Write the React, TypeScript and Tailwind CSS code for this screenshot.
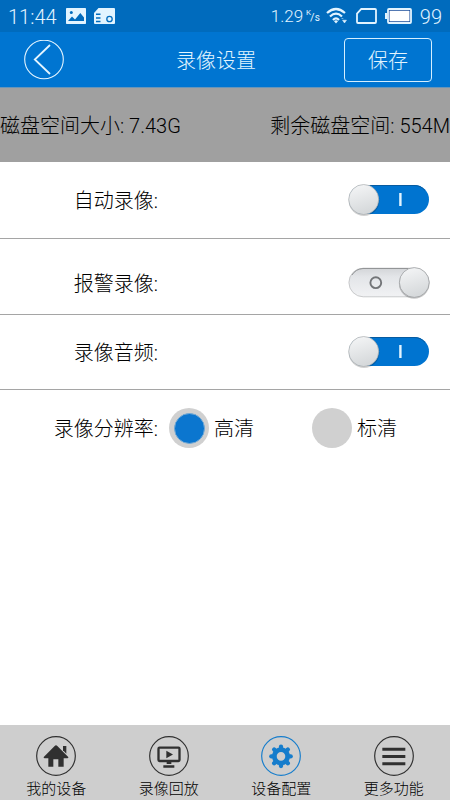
import { useState } from 'react';
import type { ReactNode } from 'react';
import clsx from 'clsx';

interface ToggleProps {
  checked: boolean;
  onChange: () => void;
}

const Toggle = ({ checked, onChange }: ToggleProps) => (
  <button type="button" role="switch" aria-checked={checked} onClick={onChange} className="w-[82px] h-8 shrink-0">
    <svg viewBox="0 0 82 32" className="w-[82px] h-8 block">
      <defs>
        <linearGradient id="knob" x1="0" y1="0" x2="0.3" y2="1">
          <stop offset="0" stopColor="#f6f7f8" />
          <stop offset="1" stopColor="#d6d9db" />
        </linearGradient>
        <linearGradient id="track" x1="0" y1="0" x2="0" y2="1">
          <stop offset="0" stopColor="#d3d5d8" />
          <stop offset="0.3" stopColor="#e3e5e8" />
          <stop offset="1" stopColor="#f1f2f4" />
        </linearGradient>
      </defs>
      {checked ? (
        <>
          <rect x="1" y="1" width="80" height="29" rx="14.5" fill="#0074d0" />
          <path d="M15 1.5H66a14 14 0 0 1 11 5" fill="none" stroke="#075ba0" />
          <rect x="51.2" y="9" width="2.4" height="13" fill="#e3f4ff" />
          <circle cx="16" cy="16.7" r="15.3" fill="#000" opacity="0.18" />
          <circle cx="15.7" cy="15.5" r="15" fill="url(#knob)" stroke="#a9adb0" strokeWidth="0.7" />
        </>
      ) : (
        <>
          <rect x="0.9" y="1.2" width="80" height="28.6" rx="14.3" fill="url(#track)" stroke="#b5b6b8" strokeWidth="0.7" />
          <path d="M4 8A14 14 0 0 1 15 1.5H66" fill="none" stroke="#939597" />
          <circle cx="27.8" cy="15.7" r="5.4" fill="none" stroke="#737578" strokeWidth="1.9" />
          <circle cx="66.2" cy="16.5" r="15.3" fill="#000" opacity="0.22" />
          <circle cx="66.3" cy="15.5" r="14.9" fill="url(#knob)" stroke="#9da0a2" strokeWidth="0.8" />
        </>
      )}
    </svg>
  </button>
);

interface SettingRowProps extends ToggleProps {
  label: string;
  className: string;
}

const SettingRow = ({ label, className, ...toggle }: SettingRowProps) => (
  <div className={clsx('flex items-center justify-between pr-5 border-b border-[#a5a5a5]', className)}>
    <span className="w-[158px] pt-0.5 text-right">{label}</span>
    <Toggle {...toggle} />
  </div>
);

interface RadioProps {
  label: string;
  checked: boolean;
  onSelect: () => void;
}

const Radio = ({ label, checked, onSelect }: RadioProps) => (
  <button type="button" role="radio" aria-checked={checked} onClick={onSelect} className="flex items-center gap-[5px]">
    <span className="w-10 h-10 rounded-full bg-[#d0d0d0] flex items-center justify-center">
      {checked && <span className="w-[31px] h-[31px] rounded-full bg-[#0b76cf] border border-[#72a9d5]" />}
    </span>
    <span className="pt-0.5">{label}</span>
  </button>
);

const HomeIcon = () => (
  <>
    <path
      d="M56 30q4-4 8 0L96 62q3 4-2 5H83v25H67V70H52v22H37V67H26q-5-1-2-5z"
      fill="currentColor"
    />
    <path d="M81 30h10v23L81 43z" fill="currentColor" />
  </>
);

const PlaybackIcon = () => (
  <>
    <rect x="28.5" y="35" width="63" height="40" rx="3" fill="none" stroke="currentColor" strokeWidth="7" />
    <path d="M52 44l20 11.5L52 67zM53 78h14v6H53zM43 88h33v7H43z" fill="currentColor" />
  </>
);

const GearIcon = () => (
  <g fill="none" stroke="currentColor">
    <circle cx="60" cy="61" r="20" strokeWidth="14" />
    {[0, 45, 90, 135, 180, 225, 270, 315].map((angle) => (
      <path key={angle} d="M60 40V32" strokeWidth="13" strokeLinecap="round" transform={`rotate(${angle} 60 61)`} />
    ))}
  </g>
);

const MenuIcon = () => <path d="M25 35h69v9H25zM25 57h69v9H25zM25 79h69v9H25z" fill="currentColor" />;

const TABS: { label: string; icon: ReactNode }[] = [
  { label: '我的设备', icon: <HomeIcon /> },
  { label: '录像回放', icon: <PlaybackIcon /> },
  { label: '设备配置', icon: <GearIcon /> },
  { label: '更多功能', icon: <MenuIcon /> },
];

const StatusBar = () => (
  <div className="h-8 shrink-0 bg-[#006bbd] flex items-center text-[#e2f4ff]">
    <span className="ml-2 pt-0.5 text-[20px] w-[58px] whitespace-nowrap">11:44</span>
    <svg width="20" height="16" viewBox="0 0 20 16" className="shrink-0">
      <rect width="20" height="16" rx="0.7" fill="currentColor" />
      <path d="M2 13L6 8.5l3 3L14.3 5 18 9.5V13z" fill="#006bbd" />
      <circle cx="5.3" cy="4.4" r="1.5" fill="#006bbd" />
    </svg>
    <svg width="21" height="16" viewBox="0 0 21 16" className="ml-2 shrink-0">
      <path d="M4.5 0H20q1 0 1 1v14q0 1-1 1H1q-1 0-1-1V5z" fill="currentColor" />
      <path d="M2 6.3h4.5M2 10h4.5M2 13.5h4.5" stroke="#006bbd" strokeWidth="1.4" />
      <circle cx="15.5" cy="11" r="2.7" fill="none" stroke="#006bbd" strokeWidth="1.3" />
    </svg>
    <div className="ml-auto mr-2 flex items-center">
      <span className="text-[17px]">1.29</span>
      <span className="ml-[3px] h-[14px] text-[8px] font-normal flex">
        <span className="self-start">K</span>
        <span className="-ml-px self-center pt-0.5 text-[11px]">/</span>
        <span className="self-end text-[10px]">s</span>
      </span>
      <svg width="21" height="18" viewBox="0 0 21 18" fill="none" stroke="currentColor" strokeWidth="2.2" className="ml-1.5">
        <path d="M1 6Q10 -2 19 6M4 9.5Q10 3.8 16 9.5M7 13Q10 9.8 13 13" />
        <path d="M8 14.3q2-2 4 0L10 16.6z" fill="currentColor" stroke="none" />
        <path d="M16.5 13.2h4L18.5 16zM15.5 11.5h1.8" fill="currentColor" strokeWidth="0.5" />
      </svg>
      <svg width="21" height="16" viewBox="0 0 21 16" fill="none" className="ml-[9px]">
        <path d="M5.3 1H19q1 0 1 1v12q0 1-1 1H2q-1 0-1-1V5.7z" stroke="currentColor" strokeWidth="1.8" />
      </svg>
      <svg width="27" height="16" viewBox="0 0 27 16" className="ml-2">
        <rect x="3" y="1" width="23" height="14" rx="1" fill="#0a3f92" stroke="currentColor" strokeWidth="1.8" />
        <rect x="4.5" y="2.7" width="20" height="10.6" fill="#fff" />
        <rect x="0" y="5" width="2.3" height="6" fill="currentColor" />
      </svg>
      <span className="ml-2 pt-0.5 text-[20px]">99</span>
    </div>
  </div>
);

export default function App() {
  const [autoRecord, setAutoRecord] = useState(true);
  const [alarmRecord, setAlarmRecord] = useState(false);
  const [recordAudio, setRecordAudio] = useState(true);
  const [quality, setQuality] = useState('hd');
  const [activeTab, setActiveTab] = useState('设备配置');

  return (
    <div className="w-[450px] h-[800px] overflow-hidden flex flex-col bg-white text-black text-[20px] leading-none font-light font-['Roboto','Noto_Sans_CJK_SC',sans-serif]">
      <StatusBar />

      <header className="h-[56px] shrink-0 bg-[#0075d1] border-b border-[#6895b9] flex items-center justify-between pl-6 pr-[18px] text-[#e4f5ff]">
        <button type="button" aria-label="返回">
          <svg width="40" height="40" viewBox="0 0 40 40" fill="none" stroke="currentColor">
            <circle cx="20" cy="19.5" r="19.3" strokeWidth="1.1" />
            <path d="M26 5L10.8 19.5 26 34" strokeWidth="1.8" />
          </svg>
        </button>
        <h1 className="ml-6 pt-0.5">录像设置</h1>
        <button type="button" className="w-[88px] h-11 pt-0.5 rounded border border-[#d5efff]">
          保存
        </button>
      </header>

      <div className="h-[74px] shrink-0 bg-[#a0a0a0] flex items-center justify-between pt-0.5 whitespace-nowrap">
        <span>磁盘空间大小: 7.43G</span>
        <span>剩余磁盘空间: 554M</span>
      </div>

      <main className="flex-1">
        <SettingRow label="自动录像:" className="h-[77px]" checked={autoRecord} onChange={() => setAutoRecord(!autoRecord)} />
        <SettingRow label="报警录像:" className="h-[76px] pt-[13px]" checked={alarmRecord} onChange={() => setAlarmRecord(!alarmRecord)} />
        <SettingRow label="录像音频:" className="h-[75px] pb-px" checked={recordAudio} onChange={() => setRecordAudio(!recordAudio)} />
        <div className="h-[76px] flex items-center">
          <span className="w-[158px] pt-0.5 text-right">录像分辨率:</span>
          <div role="radiogroup" className="ml-[11px] flex gap-[58px]">
            <Radio label="高清" checked={quality === 'hd'} onSelect={() => setQuality('hd')} />
            <Radio label="标清" checked={quality === 'sd'} onSelect={() => setQuality('sd')} />
          </div>
        </div>
      </main>

      <nav className="h-[75px] shrink-0 bg-[#cecece] grid grid-cols-4">
        {TABS.map((tab) => (
          <button
            key={tab.label}
            type="button"
            onClick={() => setActiveTab(tab.label)}
            className="pt-[11px] flex flex-col items-center gap-1.5"
          >
            <svg
              viewBox="0 0 120 120"
              className={clsx('w-10 h-10', activeTab === tab.label ? 'text-[#167dcc]' : 'text-[#303030]')}
            >
              <circle cx="60" cy="60" r="58" fill="none" stroke="currentColor" strokeWidth="3.5" />
              {tab.icon}
            </svg>
            <span className="text-[15px]">{tab.label}</span>
          </button>
        ))}
      </nav>
    </div>
  );
}
